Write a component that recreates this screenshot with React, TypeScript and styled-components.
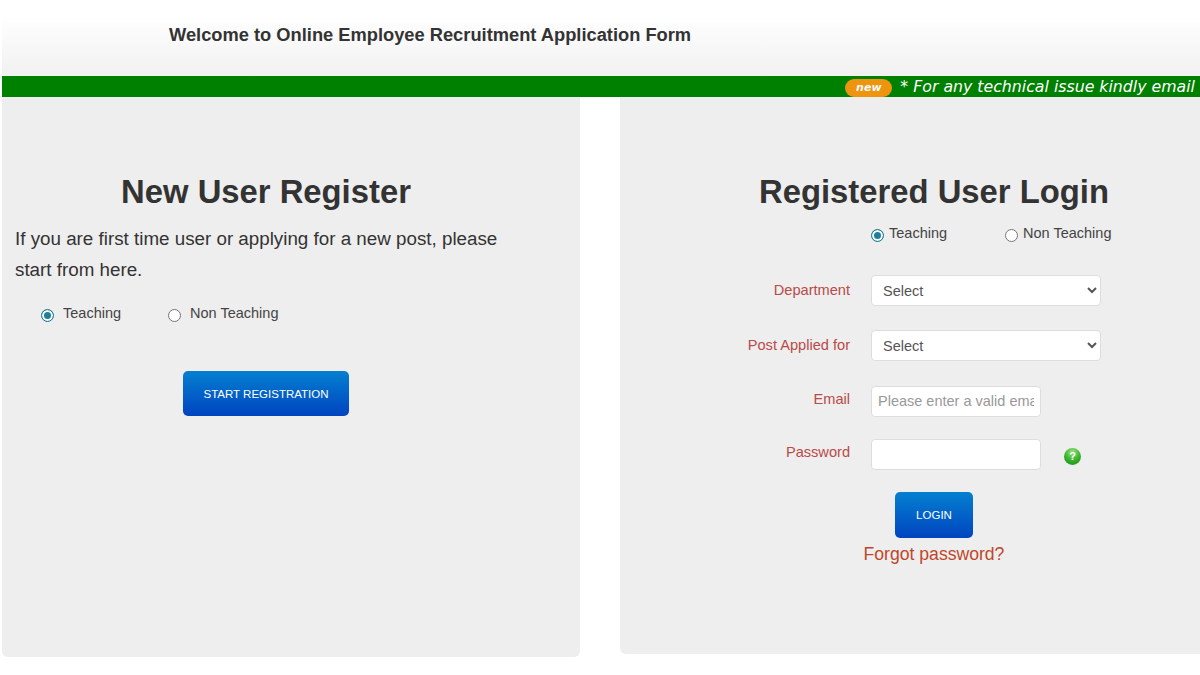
import React from "react";
import styled, { createGlobalStyle } from "styled-components";

const Global = createGlobalStyle`
  html, body { margin: 0; padding: 0; background: #fff; overflow: hidden; }
  body { font-family: "Liberation Sans", Arial, sans-serif; color: #333; }
  * { box-sizing: border-box; }
`;
const Page = styled.div`
  width: 1200px; height: 675px; padding-left: 2px; overflow: hidden;
`;
const Header = styled.header`
  height: 76px; padding: 24px 0 0 167px;
  background: linear-gradient(to bottom, #ffffff 20%, #f1f1f1 100%);
`;
const HeaderTitle = styled.h1`
  margin: 0; font-size: 18.3px; line-height: 22px; font-weight: 700; color: #333; white-space: nowrap;
`;
const Ticker = styled.div`
  height: 21px; background: #008000; display: flex; justify-content: flex-end; align-items: center;
  padding-right: 5px; overflow: hidden; white-space: nowrap;
`;
const NewBadge = styled.span`
  width: 47px; height: 18px; margin-right: 8px; margin-top: 3px; border-radius: 9px; background: #f7950f; color: #fff;
  font: italic 700 11px/18px "DejaVu Sans", sans-serif; text-align: center; opacity: .97;
`;
const TickerText = styled.span`
  font: italic 400 15.75px/21px "DejaVu Sans", Verdana, sans-serif; color: #fff;
`;
const Panels = styled.main`
  display: grid; grid-template-columns: 578px 628px; column-gap: 40px;
`;
const Panel = styled.section<{ $h: number; $pad: number }>`
  height: ${p => p.$h}px; background: #eeeeee; border-radius: 0 0 6px 6px;
  padding: 76px ${p => p.$pad}px 0 0;
  display: flex; flex-direction: column;
`;
const Title = styled.h2`
  margin: 0; text-align: center; font-size: 32.8px; line-height: 38px; font-weight: 700; color: #333;
`;
const Intro = styled.p`
  margin: 12px 0 0; padding: 0 20px 0 13px; font-size: 18.8px; line-height: 31px; color: #333; width: 528px;
  font-weight: 400;
`;
const RadioRow = styled.div<{ $left: number; $top: number; $gap: number }>`
  display: flex; column-gap: ${p => p.$gap}px; padding-left: ${p => p.$left}px; margin-top: ${p => p.$top}px;
`;
const RadioLabel = styled.label`
  display: flex; align-items: flex-start; font-size: 14.5px; line-height: 20px; color: #444;
`;
const RadioDot = styled.span<{ $on?: boolean; $space: number }>`
  width: 13px; height: 13px; margin: 6px ${p => p.$space}px 0 0; border-radius: 50%; flex: none;
  background: ${p => (p.$on ? "#1f7f9a" : "#fff")};
  border: 1px solid ${p => (p.$on ? "#1f7f9a" : "#767676")};
  box-shadow: ${p => (p.$on ? "inset 0 0 0 2px #fff" : "none")};
`;
const BlueButton = styled.button<{ $w: number; $h: number }>`
  width: ${p => p.$w}px; height: ${p => p.$h}px; padding: 0; border: 0; border-radius: 5px;
  background: linear-gradient(to bottom, #0480d0 0%, #0044c0 100%);
  color: #fff; font: 400 11.5px "Liberation Sans", Arial, sans-serif;
  display: block;
`;
const StartWrap = styled.div`
  width: 528px; display: flex; justify-content: center; margin-top: 48px;
`;
const Form = styled.div`
  display: grid; grid-template-columns: 230px 1fr; column-gap: 21px; margin-top: 32px;
`;
const FieldLabel = styled.label<{ $h: number; $mb: number; $shift: number }>`
  height: ${p => p.$h}px; margin-bottom: ${p => p.$mb}px; padding-top: ${p => p.$shift}px;
  text-align: right; font-size: 14.6px; line-height: 20px; color: #b94a48; white-space: nowrap;
`;
const FieldCell = styled.div<{ $h: number; $mb: number }>`
  height: ${p => p.$h}px; margin-bottom: ${p => p.$mb}px; display: flex; align-items: center;
`;
const SelectBox = styled.select`
  width: 230px; height: 31px; border: 1px solid #ddd; border-radius: 4px; background: #fff;
  padding: 0 4px 0 7px; color: #555; font: 400 14.5px "Liberation Sans", Arial, sans-serif;
`;
const TextInput = styled.input`
  width: 170px; height: 31px; border: 1px solid #ddd; border-radius: 4px; background: #fff;
  padding: 0 6px 2px; color: #555; font: 400 14.5px "Liberation Sans", Arial, sans-serif;
  &::placeholder { color: #999; opacity: 1; }
`;
const HelpIcon = styled.span`
  width: 17px; height: 17px; margin: 4px 0 0 23px; border-radius: 50%; color: #fff;
  background: radial-gradient(circle at 50% 25%, #9be08a 0%, #3bb52c 50%, #128a12 100%);
  font: 700 11px/17px "Liberation Sans", Arial, sans-serif; text-align: center;
`;
const Centered = styled.div`
  display: flex; flex-direction: column; align-items: center;
`;
const Forgot = styled.a`
  margin-top: 5px; font-size: 17.6px; line-height: 22px; color: #c0462a;
`;

export default function App() {
  return (
    <Page>
      <Global />
      <Header><HeaderTitle>Welcome to Online Employee Recruitment Application Form</HeaderTitle></Header>
      <Ticker>
        <NewBadge>new</NewBadge>
        <TickerText>* For any technical issue kindly email</TickerText>
      </Ticker>
      <Panels>
        <Panel $h={560} $pad={50}>
          <Title>New User Register</Title>
          <Intro>If you are first time user or applying for a new post, please start from here.</Intro>
          <RadioRow $left={39} $top={18} $gap={47}>
            <RadioLabel><RadioDot $on $space={9} />Teaching</RadioLabel>
            <RadioLabel><RadioDot $space={9} />Non Teaching</RadioLabel>
          </RadioRow>
          <StartWrap><BlueButton $w={166} $h={45}>START REGISTRATION</BlueButton></StartWrap>
        </Panel>
        <Panel $h={557} $pad={0}>
          <Title>Registered User Login</Title>
          <RadioRow $left={251} $top={12} $gap={58}>
            <RadioLabel><RadioDot $on $space={5} />Teaching</RadioLabel>
            <RadioLabel><RadioDot $space={5} />Non Teaching</RadioLabel>
          </RadioRow>
          <Form>
            <FieldLabel $h={31} $mb={24} $shift={5}>Department</FieldLabel>
            <FieldCell $h={31} $mb={24}><SelectBox defaultValue="Select"><option>Select</option></SelectBox></FieldCell>
            <FieldLabel $h={31} $mb={25} $shift={5}>Post Applied for</FieldLabel>
            <FieldCell $h={31} $mb={25}><SelectBox defaultValue="Select"><option>Select</option></SelectBox></FieldCell>
            <FieldLabel $h={31} $mb={22} $shift={3}>Email</FieldLabel>
            <FieldCell $h={31} $mb={22}><TextInput placeholder="Please enter a valid email" /></FieldCell>
            <FieldLabel $h={31} $mb={22} $shift={3}>Password</FieldLabel>
            <FieldCell $h={31} $mb={22}><TextInput type="password" /><HelpIcon>?</HelpIcon></FieldCell>
          </Form>
          <Centered>
            <BlueButton $w={78} $h={46}>LOGIN</BlueButton>
            <Forgot>Forgot password?</Forgot>
          </Centered>
        </Panel>
      </Panels>
    </Page>
  );
}
